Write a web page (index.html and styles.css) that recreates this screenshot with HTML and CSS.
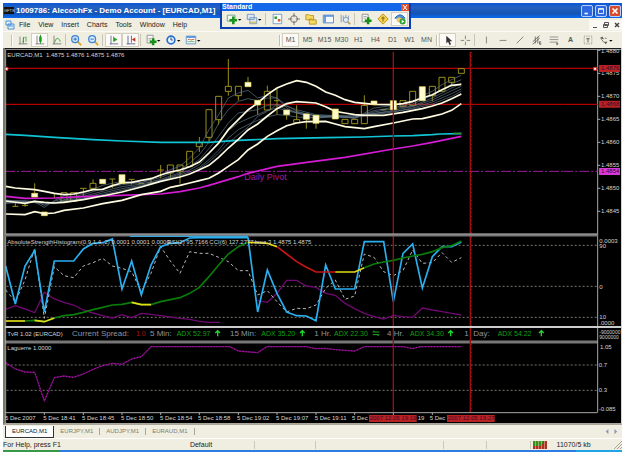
FILE: index.html
```html
<!DOCTYPE html>
<html lang="en">
<head>
<meta charset="utf-8">
<title>1009786: AleccohFx - Demo Account - [EURCAD,M1]</title>
<link rel="stylesheet" href="styles.css">
</head>
<body>
<div class="window">
  <header class="titlebar">
    <span class="app-logo">GFTS</span>
    <h1>1009786: AleccohFx - Demo Account - [EURCAD,M1]</h1>
    <div class="win-buttons">
      <button aria-label="Minimize"><svg viewBox="0 0 12 12"><path d="M3 9h4" stroke="#fff" stroke-width="2"/></svg></button>
      <button aria-label="Restore"><svg viewBox="0 0 12 12"><path d="M3 3h6v6H3zM3 4h6" stroke="#fff" fill="none"/></svg></button>
      <button class="close" aria-label="Close"><svg viewBox="0 0 12 12"><path d="M3 3l6 6M9 3l-6 6" stroke="#fff" stroke-width="2"/></svg></button>
    </div>
  </header>

  <nav class="menubar">
    <svg class="menu-icon" viewBox="0 0 10 10"><path d="M1 1h5v4H1zM3 4h6v5H3z" fill="#e8f2ff" stroke="#4b8fd0"/><path d="M4 6h4" stroke="#4b8fd0"/></svg>
    <a href="#">File</a><a href="#">View</a><a href="#">Insert</a><a href="#">Charts</a><a href="#">Tools</a><a href="#">Window</a><a href="#">Help</a>
    <div class="mdi-buttons">
      <button aria-label="Minimize chart"><svg viewBox="0 0 11 10"><path d="M4 7.500h4" stroke="#555"/></svg></button>
      <button aria-label="Restore chart"><svg viewBox="0 0 11 10"><path d="M4.500 2.500h4v3h-4zM3.500 4.500h4v3h-4z" stroke="#555" fill="none"/></svg></button>
      <button aria-label="Close chart"><svg viewBox="0 0 11 10"><path d="M4 3l4 4M8 3l-4 4" stroke="#444" stroke-width="1.500"/></svg></button>
    </div>
  </nav>

  <div class="toolbar">
    <i class="grip"></i>
    <button aria-label="Bar chart"><svg viewBox="0 0 14 14"><path d="M3.500 3v9M2 11.500h10" stroke="#777"/><path d="M6 9h1.500V4H9M7.500 4v7M10.500 3v6" stroke="#3a9a3a" fill="none"/></svg></button>
    <button class="on" aria-label="Candlesticks"><svg viewBox="0 0 14 14"><path d="M3.500 2v10M2 11.500h10" stroke="#777"/><path d="M7.500 1v10" stroke="#087a08"/><path d="M6 3h3v6H6z" fill="#18a018"/></svg></button>
    <button aria-label="Line chart"><svg viewBox="0 0 14 14"><path d="M3.500 2v10M2 11.500h10" stroke="#777"/><path d="M4 10q2-6 4-5t3 4" stroke="#3a9a3a" fill="none"/></svg></button>
    <i class="sep"></i>
    <button aria-label="Zoom in"><svg viewBox="0 0 14 14"><path d="M9 9l4 4" stroke="#d9a520" stroke-width="2"/><circle cx="6" cy="6" r="4" fill="#d4ebff" stroke="#3f83d6" stroke-width="1.500"/><path d="M4 6h4M6 4v4" stroke="#2460b0"/></svg></button>
    <button aria-label="Zoom out"><svg viewBox="0 0 14 14"><path d="M9 9l4 4" stroke="#d9a520" stroke-width="2"/><circle cx="6" cy="6" r="4" fill="#d4ebff" stroke="#3f83d6" stroke-width="1.500"/><path d="M4 6h4" stroke="#2460b0"/></svg></button>
    <i class="sep wide"></i>
    <button class="on" aria-label="Auto scroll"><svg viewBox="0 0 14 14"><path d="M3.500 2v10M2 11.500h10M6.500 3v6" stroke="#668"/><path d="M7 4l4 2.500L7 9z" fill="#28a028"/></svg></button>
    <button class="on" aria-label="Chart shift"><svg viewBox="0 0 14 14"><path d="M3.500 2v10M2 11.500h10M7.500 2v8" stroke="#558"/><path d="M12 4L8 6.500 12 9z" fill="#c03020"/></svg></button>
    <i class="sep wide"></i>
    <button class="drop" aria-label="Indicators"><svg viewBox="0 0 18 14"><path d="M2.500 1.500h7v9h-7z" fill="#fff" stroke="#888"/><path d="M4 5h4M4 7h3" stroke="#999"/><path d="M9.500 5v8M5.500 9h8" stroke="#149014" stroke-width="3"/><path d="M14 7h4l-2 2z"/></svg></button>
    <button class="drop" aria-label="Periods"><svg viewBox="0 0 18 14"><circle cx="7" cy="7" r="4.500" fill="#e6f2ff" stroke="#2a70cc" stroke-width="2"/><path d="M7 4v3h2" stroke="#234" fill="none"/><path d="M14 7h4l-2 2z"/></svg></button>
    <button class="drop" aria-label="Templates"><svg viewBox="0 0 18 14"><path d="M1.500 2.500h11v9h-11z" fill="#fff" stroke="#5a8cc0"/><path d="M2 3.500h10" stroke="#4c8fe0" stroke-width="2"/><path d="M3 7l2-1 2 1 4-1" stroke="#b05030" fill="none"/><path d="M3 9h8" stroke="#4a4"/><path d="M14 7h4l-2 2z"/></svg></button>
    <i class="grip periods"></i>
    <button class="on">M1</button><button>M5</button><button>M15</button><button>M30</button><button>H1</button><button>H4</button><button>D1</button><button>W1</button><button>MN</button>
    <i class="grip"></i>
    <button class="on" aria-label="Cursor"><svg viewBox="0 0 14 14"><path d="M5 2v9l2-2 2 4 1.500-1L9 8.500h3z" fill="#333"/></svg></button>
    <button aria-label="Crosshair"><svg viewBox="0 0 14 14"><path d="M7.500 2v4M7.500 9v4M2 7.500h4M9 7.500h4" stroke="#777"/></svg></button>
    <i class="sep wide"></i>
    <button aria-label="Vertical line"><svg viewBox="0 0 14 14"><path d="M7.500 3v8" stroke="#777"/></svg></button>
    <button aria-label="Horizontal line"><svg viewBox="0 0 14 14"><path d="M3 7.500h8" stroke="#777"/></svg></button>
    <button aria-label="Trendline"><svg viewBox="0 0 14 14"><path d="M3 11l8-8" stroke="#777"/></svg></button>
    <button aria-label="Channel"><svg viewBox="0 0 14 14"><path d="M2 9l8-7M2 12l8-7M5 3v8M8 3v8M11.500 9h-1.500v3h2M10 10.500h2" stroke="#666" fill="none"/></svg></button>
    <button aria-label="Fibonacci"><svg viewBox="0 0 14 14"><path d="M2 3.500h10M2 6.500h10M2 9.500h8" stroke="#888"/><path d="M10.500 9v4M10 11.500h2" stroke="#555"/></svg></button>
    <button class="letter">A</button>
    <button aria-label="Text label"><svg viewBox="0 0 14 14"><path d="M2.500 2.500h9v9h-9z" stroke="#888" fill="none" stroke-dasharray="1 1"/><path d="M5 5.500h4M7 5v5" stroke="#555"/></svg></button>
    <button class="drop" aria-label="Arrows"><svg viewBox="0 0 18 14"><path d="M2 5l3-2 2 3zM7 9l4 0-2 3z" fill="#555"/><path d="M4 6l3 4M8 5h2" stroke="#666"/><path d="M13 7h4l-2 2z"/></svg></button>
  </div>

  <main class="charts">
    <svg class="pane" viewBox="15 0 1848 567">
      <path class="level-red" d="M15 61H1690M15 169H1690"/>
      <path class="pivot" d="M15 370H1690"/>
      <path class="candle" d="M37 475h18M46 475V462M66 472h18M75 476V462M104 436V406M163 434V450M183 434h18v26h-18zM212 434h18v26h-18zM240 421h20M250 421V445M270 406h18v15h-18zM279 406V394M328 393h18M337 393V420M386 394h18M395 394V410M415 407h18M444 405h18M453 405V388M472 366h20M482 351V391M502 351h18v24h-18zM511 375V390M531 351h18v20h-18zM540 371V407M560 310h18v46h-18zM589 284h18v12h-18zM598 284V267M598 296V312M618 185h18v83h-18zM627 268V280M647 145h18v70h-18zM656 215V230M676 115h18v15h-18zM685 115V33M685 130V143M706 115h18v28h-18zM715 143V158M744 103V87M773 170V200M793 130h18v56h-18zM802 130V113M822 158h18M831 122V200M860 200V215M881 215h18v9h-18zM890 215V172M919 214V242M948 226V242M1026 214h18v13h-18zM1055 214h18v13h-18zM1084 172h18v55h-18zM1093 172V142M1142 185h18M1200 158h18v17h-18zM1229 130h18v42h-18zM1288 115h18v28h-18zM1297 143V160M1317 88h18v42h-18zM1346 88h18v15h-18zM1355 103V115M1375 62h18v14h-18z"/>
      <g class="ribbon">
        <polyline points="17,458 75,458 104,462 133,478 163,458 192,443 250,436 308,412 366,400 424,404 482,382 511,365 540,355 569,330 598,300 627,245 656,200 685,150 715,135 744,127 773,150 802,142 831,150 860,180 890,195 948,212 1006,200 1064,212 1093,195 1122,180 1180,172 1238,163 1267,143 1297,130 1326,110 1355,95 1384,82"/>
        <polyline points="17,464 75,464 104,458 133,472 163,460 192,450 250,440 308,422 366,410 424,404 482,388 540,365 569,345 598,320 627,282 656,225 685,185 715,160 744,152 773,158 802,150 831,150 860,172 890,190 948,205 1006,208 1064,208 1122,188 1180,178 1238,168 1297,142 1355,108 1384,95"/>
        <polyline points="17,456 104,464 133,468 163,465 192,455 250,445 308,430 366,416 424,408 482,394 540,374 569,355 598,335 627,302 656,265 685,225 715,195 744,190 773,185 802,172 831,170 860,185 890,193 948,202 1006,206 1064,208 1122,192 1180,182 1238,174 1297,150 1355,120 1384,106"/>
        <polyline points="17,462 104,460 163,467 192,457 250,450 308,435 366,422 424,412 482,397 540,378 569,366 598,350 627,318 656,288 685,248 715,225 744,212 773,200 802,187 831,180 860,188 890,195 948,204 1006,205 1064,210 1122,197 1180,187 1238,176 1297,156 1355,128 1384,115"/>
        <polyline points="17,466 104,462 163,464 192,460 250,452 308,440 366,427 424,414 482,399 540,382 569,372 598,358 627,335 656,306 685,270 715,245 744,230 773,217 802,207 831,200 860,202 890,207 948,210 1006,206 1064,206 1122,200 1180,192 1238,180 1297,162 1355,137 1384,123"/>
        <polyline points="598,362 627,342 656,315 685,285 715,260 744,238 773,205 802,190 831,170 860,175 890,185 948,200 1006,203 1064,203 1122,196 1180,190 1238,183 1297,168 1355,145 1384,130"/>
      </g>
      <polyline class="slow-cyan" points="17,259 75,262 163,268 279,275 366,279 482,283 627,283 700,278 831,272 980,269 1090,267 1180,264 1238,263 1297,260 1320,258 1384,257"/>
      <path d="M1360 256h24" stroke="#2f9a2f" stroke-width="4"/>
      <polyline class="slow-magenta" points="17,445 75,451 163,450 250,446 366,442 482,438 540,431 598,420 627,412 715,386 744,376 831,355 920,343 1035,328 1180,303 1238,294 1297,283 1384,265"/>
      <g class="band">
        <polyline points="17,415 46,420 104,425 133,430 163,436 192,440 221,438 250,432 279,425 308,424 337,413 366,405 395,403 424,397 453,392 482,381 511,372 540,366 569,356 598,342 627,315 656,285 685,245 715,215 744,186 773,165 802,140 831,120 860,108 890,98 919,103 948,115 977,132 1006,142 1035,155 1064,163 1093,166 1122,169 1180,170 1209,167 1238,160 1267,150 1297,140 1326,125 1355,112 1384,109"/>
        <polyline points="17,459 75,466 104,460 133,463 163,465 192,463 250,455 308,444 366,432 424,417 482,400 540,387 569,378 598,365 627,352 656,328 685,300 715,274 744,246 773,228 802,204 831,182 860,167 890,161 948,165 977,176 1006,190 1035,195 1064,200 1093,202 1151,202 1209,193 1267,182 1297,174 1326,165 1355,152 1384,138"/>
        <polyline points="17,498 75,500 104,491 133,497 163,495 192,487 250,480 308,467 366,457 424,440 482,430 511,418 540,412 569,405 598,398 627,391 656,375 685,355 715,335 744,306 773,288 802,265 831,248 860,233 890,225 919,221 977,220 1006,228 1035,236 1093,242 1122,236 1180,225 1238,213 1267,212 1297,205 1326,198 1355,187 1384,167"/>
      </g>
      <path class="bear" d="M95 436h18v11H95zM124 492h18v11h-18zM299 394h18v13h-18zM357 380h18v26h-18zM735 103h18v13h-18zM764 157h18v14h-18zM851 186h18v14h-18zM910 198h18v16h-18zM939 202h18v24h-18zM997 183h18v30h-18zM1113 159h18v11h-18zM1171 158h18v27h-18zM1258 116h18v42h-18z"/>
      <path class="level-red thin" d="M1180 12V567M1411 12V567"/>
      <path class="cursor-dots" d="M1414 12V567"/>
      <path class="frame" d="M17 567V4H1863M1793 4V567M1793 7h8M1793 76h8M1793 145h8M1793 214h8M1793 283h8M1793 352h8M1793 421h8M1793 490h8"/>
      <path d="M15 561H1793" stroke="#777" stroke-width="9"/><path d="M15 558H1793" stroke="#bbb" stroke-width="2"/>
      <path d="M390 565H744" stroke="#35a8e0" stroke-width="4"/>
      <path class="level-red" d="M1690 61H1793M1690 169H1793"/><path class="pivot" d="M1690 370H1793"/>
      <path d="M15 58h9v9h-9zM1781 58h9v9h-9z" fill="#fff" stroke="#c22" stroke-width="3"/>
      <text x="22" y="26">EURCAD,M1&#160; 1.4875 1.4876 1.4875 1.4876</text>
      <text class="pivot-label" x="733" y="396">Daily Pivot</text>
      <g class="axis">
        <text x="1803" y="15">1.4880</text><text x="1803" y="82">1.4875</text><text x="1803" y="151">1.4870</text><text x="1803" y="220">1.4865</text><text x="1803" y="289">1.4860</text><text x="1803" y="358">1.4855</text><text x="1803" y="427">1.4850</text><text x="1803" y="496">1.4845</text>
        <path d="M1797 51h63v21h-63zM1797 158h63v21h-63z" fill="#b82222"/><path d="M1797 360h63v21h-63z" fill="#d838d8"/>
        <text class="dark" x="1803" y="67">1.4876</text><text class="dark" x="1803" y="175">1.4868</text><text class="dark" x="1803" y="376">1.4854</text>
      </g>
    </svg>

    <svg class="pane" viewBox="15 21 1848 273">
      <path class="level" d="M20 46H1793M20 169H1793M20 262H1793"/>
      <polyline class="purple" points="17,238 46,227 75,237 104,248 133,187 163,207 192,217 221,225 250,240 279,249 308,257 337,264 366,254 395,263 424,250 453,253 482,257 511,261 540,265 569,268 598,274 627,277 660,277"/>
      <polyline class="purple" points="773,212 802,217 831,190 860,151 890,151 919,168 948,172 977,190 1006,196 1035,220 1064,236 1093,250 1122,260 1151,267 1180,256 1209,260 1238,262 1267,234 1297,240 1326,245 1355,250 1384,255"/>
      <polyline class="dashed" points="17,180 46,215 75,150 104,55 133,265 163,110 192,137 221,143 250,108 279,98 308,85 337,108 366,115 395,125 424,185 453,130 482,50 511,93 540,130 569,65 598,70 627,70 656,82 685,95 715,122 744,122 773,195 802,182 831,215 860,246 890,235 919,236 948,225 977,175 1006,150 1035,208 1064,198 1093,72 1122,82 1151,125 1180,137 1209,122 1238,60 1267,100 1297,98 1326,68 1355,97 1384,83"/>
      <polyline class="osc-outer" points="17,108 46,222 75,108 104,62 133,246 163,93 221,93 250,57 279,40 308,38 337,27 366,177 395,93 424,195 453,105 482,50 511,40 540,38 569,24 598,23 744,23 773,246 802,120 831,190 860,246 890,257 919,258 948,272 977,105 1006,177 1064,177 1093,35 1151,35 1180,215 1209,70 1238,42 1267,174 1297,80 1326,50 1355,50 1384,36"/>
      <g class="strength">
        <polyline class="up" points="75,273 104,271 133,275 163,264 192,257 221,254 250,247 279,239 308,232 337,225 366,223 395,217 424,224 453,224 482,215 511,209 540,203 569,190 598,172 627,140 656,105 685,72 715,50 744,37"/>
        <polyline class="flat" points="17,273 75,273"/><polyline class="flat" points="104,271 133,275 163,264"/><polyline class="flat" points="395,217 424,224 453,224"/>
        <polyline class="flat" points="744,37 773,38 802,40 831,50"/>
        <polyline class="down" points="831,50 860,72 890,95 919,112 948,126 1006,126"/>
        <polyline class="flat" points="1006,126 1064,126 1093,113"/>
        <polyline class="up" points="1093,113 1122,102 1151,96 1180,91 1209,84 1238,78 1267,73 1297,65 1326,53 1355,47 1384,33"/>
      </g>
      <path class="level-red thin" d="M1180 21V290M1411 21V290"/><path class="cursor-dots" d="M1414 21V290"/>
      <path class="frame" d="M17 21V294M1793 21V290"/>
      <path d="M15 291H1863" stroke="#ccc" stroke-width="6"/>
      <text x="22" y="42">AbsoluteStrengthHistogram(0,9,1,4,,2) 0.0001 0.0001 0.0000</text>
      <text x="502" y="42">RSI(2) 95.7166</text><text x="628" y="42">CCI(6) 127.2777</text><text x="764" y="42">bma 3 1.4875 1.4875</text>
      <g class="axis"><text x="1798" y="38">0.0003</text><text x="1798" y="54">90</text><text x="1798" y="176">0</text><text x="1798" y="268">10</text><text x="1798" y="285">.0000</text></g>
    </svg>

    <svg class="pane" viewBox="15 294 1848 48">
      <path d="M15 336H1793" stroke="#777" stroke-width="9"/>
      <text x="22" y="318">TvR 1.02 (EURCAD)</text>
      <g class="trend">
        <text x="216" y="319">Current Spread:</text><text class="red" x="408" y="319">1.0</text>
        <text x="450" y="319">5 Min:</text><text class="adx" x="530" y="319">ADX 52.97</text>
        <text x="690" y="319">15 Min:</text><text class="adx" x="784" y="319">ADX 35.20</text>
        <text x="943" y="319">1 Hr.</text><text class="adx" x="1002" y="319">ADX 22.30</text>
        <text x="1161" y="319">4 Hr.</text><text class="adx" x="1230" y="319">ADX 34.30</text>
        <text x="1393" y="319">1</text><text x="1420" y="319">Day:</text><text class="adx" x="1493" y="319">ADX 54.22</text>
      </g>
      <path d="M653 319V304M646 309l7-7 7 7M907 319V304M900 309l7-7 7 7M1352 319V304M1345 309l7-7 7 7M1624 319V304M1617 309l7-7 7 7" stroke="#20d830" stroke-width="4" fill="none"/>
      <path d="M1118 306h20M1118 314h20M1122 302v4M1134 314v4" stroke="#20a828" stroke-width="3"/>
      <path class="level-red thin" d="M1180 294V340M1411 294V340"/>
      <path class="frame" d="M17 294V342M1793 294V342"/>
      <g class="axis small"><text x="1798" y="311">-9000000</text><text x="1798" y="328">9000000</text></g>
    </svg>

    <svg class="pane" viewBox="15 12 1848 237">
      <path class="level" d="M20 75H1793M20 151H1793"/>
      <polyline class="laguerre" points="17,68 46,87 75,96 104,97 133,183 163,113 192,108 221,112 250,102 279,88 308,77 337,70 366,73 395,57 424,50 453,20 690,20 715,33 773,38 800,20 920,20 945,26 977,25 1006,29 1035,31 1064,33 1093,20 1210,20 1238,26 1260,20 1384,20"/>
      <polyline class="laguerre-dots" points="17,68 46,87 75,96 104,97 133,183 163,113 192,108 221,112 250,102 279,88 308,77 337,70 366,73 395,57 424,50 453,20 690,20 715,33 773,38 800,20 920,20 945,26 977,25 1006,29 1035,31 1064,33 1093,20 1210,20 1238,26 1260,20 1384,20"/>
      <path class="level-red thin" d="M1180 12V217M1411 12V217"/><path class="cursor-dots" d="M1414 12V217"/>
      <path class="frame" d="M17 12V249M1793 12V217M15 218H1793M133 218v7M250 218v7M366 218v7M482 218v7M598 218v7M715 218v7M831 218v7M948 218v7M1064 218v7M1180 218v7M1297 218v7"/>
      <text x="22" y="30">Laguerre 1.0000</text>
      <g class="axis"><text x="1800" y="26">1.05</text><text x="1796" y="80">0.7</text><text x="1796" y="156">0.3</text><text x="1796" y="213">-0.085</text></g>
      <g class="axis time">
        <text x="15" y="241">5 Dec 2007</text><text x="130" y="241">5 Dec 18:41</text><text x="246" y="241">5 Dec 18:45</text><text x="363" y="241">5 Dec 18:50</text><text x="480" y="241">5 Dec 18:54</text><text x="594" y="241">5 Dec 18:58</text><text x="711" y="241">5 Dec 19:02</text><text x="828" y="241">5 Dec 19:07</text><text x="944" y="241">5 Dec 19:11</text><text x="1056" y="241">5 Dec</text><text x="1253" y="241">19</text><text x="1289" y="241">5 Dec</text>
        <path d="M1107 225h143v21h-143zM1341 225h143v21h-143z" fill="#b82222"/>
        <text class="dark" x="1109" y="241">2007.12.05 19:19</text><text class="dark" x="1343" y="241">2007.12.05 19:27</text>
      </g>
    </svg>
  </main>

  <nav class="tabs">
    <a class="active" href="#">EURCAD,M1</a><a href="#">EURJPY,M1</a><a href="#">AUDJPY,M1</a><a href="#">EURAUD,M1</a>
    <svg class="tab-scroll" viewBox="0 0 16 8"><path d="M5 1L2 4l3 3zM12 1l3 3-3 3z" fill="#8a97b5"/></svg>
  </nav>

  <footer class="status">
    <span class="help">For Help, press F1</span><span class="profile">Default</span><span></span><span></span><span></span><span></span>
    <span class="link"><svg viewBox="0 0 14 8"><path d="M0 0h14v8H0z" fill="#b03020"/><path d="M0 0h10v3H8v2H0z" fill="#3c8c20"/><path d="M2.500 0v8M5.500 0v8M8.500 0v8M11.500 0v8" stroke="#e8d8c0" stroke-width=".5"/></svg>11070/5 kb</span>
    <svg class="resize" viewBox="0 0 9 9"><path d="M1 9l8-8M4 9l5-5M7 9l2-2" stroke="#aaa693"/></svg>
  </footer>
  <div class="taskbar"><i class="start"></i><i class="tray"></i></div>

  <section class="floating">
    <header><h2>Standard</h2><button aria-label="Close toolbar"><svg viewBox="0 0 8 7"><path d="M2 1l4 5M6 1L2 6" stroke="#fff"/></svg></button></header>
    <div class="tools">
      <button class="drop" aria-label="New chart"><svg viewBox="0 0 18 14"><path d="M1.500 2.500h9v7h-9z" fill="#eef6ee" stroke="#6a9a8a"/><path d="M8.500 4v9M4 8.500h9" stroke="#18951c" stroke-width="3"/><path d="M14 7h4l-2 2z"/></svg></button>
      <button class="drop" aria-label="Profiles"><svg viewBox="0 0 18 14"><path d="M1.500 1.500h8v6h-8zM4.500 5.500h8v7h-8z" fill="#d8e8fa" stroke="#7090b8"/><path d="M5 10h7v2H5z" fill="#d8c468"/><path d="M14 7h4l-2 2z"/></svg></button>
      <i class="sep wide"></i>
      <button aria-label="Market watch"><svg viewBox="0 0 14 14"><path d="M2.500 1.500h10v11h-10z" fill="#f7fbff" stroke="#6a94cc"/><path d="M4 4h3v3H4z" fill="#38a038"/><path d="M8 7h3v3H8z" fill="#d06040"/></svg></button>
      <button aria-label="Data window"><svg viewBox="0 0 14 14"><circle cx="7" cy="7" r="4" fill="none" stroke="#666"/><path d="M7 0v5M7 9v5M0 7h5M9 7h5" stroke="#666"/></svg></button>
      <button aria-label="Navigator"><svg viewBox="0 0 14 14"><path d="M1 2h4l1 1h4v5H1zM5 7h3l1 1h4v5H5z" fill="#f6dc62" stroke="#b89018"/></svg></button>
      <button aria-label="Terminal"><svg viewBox="0 0 14 14"><path d="M1.500 2.500h12v9h-12z" fill="#f6faff" stroke="#4878b8"/><path d="M2 3.500h11M3.500 3v8" stroke="#5590dc" stroke-width="2"/></svg></button>
      <button aria-label="Strategy tester"><svg viewBox="0 0 14 14"><path d="M2.500 2v9M5 3v7M8 2v5M11 3v5" stroke="#7a92b4"/><circle cx="8" cy="8" r="3" fill="#e0ecf8" stroke="#7a92b4"/><path d="M10 10l3 3" stroke="#b8a060" stroke-width="2"/></svg></button>
      <i class="sep wide"></i>
      <button aria-label="New order"><svg viewBox="0 0 14 14"><path d="M2.500 1.500h7v9h-7z" fill="#fff" stroke="#888"/><path d="M4 4h4M4 6h3" stroke="#999"/><path d="M9.500 5v8M5.500 9h8" stroke="#149014" stroke-width="3"/></svg></button>
      <button aria-label="MetaEditor"><svg viewBox="0 0 14 14"><path d="M7 1l6 6-6 6-6-6z" fill="#f7d24c" stroke="#b88a10"/><path d="M7 4v6M5 6h4" stroke="#765808"/></svg></button>
      <button class="on" aria-label="Expert advisors"><svg viewBox="0 0 14 14"><path d="M1 6q6-8 12 0z" fill="#4c94e0" stroke="#2864a8"/><circle cx="6" cy="8" r="3" fill="#f0c870"/><circle cx="10" cy="10" r="3.500" fill="#28a030"/><path d="M9 8l3 2-3 2z" fill="#fff"/></svg></button>
    </div>
  </section>
</div>
</body>
</html>
```

FILE: styles.css
```css
* { box-sizing: border-box; }
body {
  margin: 0;
  padding: 3px 3px 0;
  background: #fff;
  font: 7px/10px "Liberation Sans", sans-serif;
  color: #222;
}
h1, h2 { margin: 0; font-size: inherit; }
a { color: inherit; text-decoration: none; }
svg { display: block; }
button { margin: 0; padding: 0; border: 0; background: none; font: inherit; color: #555; }

.window {
  position: relative;
  display: flex;
  flex-direction: column;
  background: #f0eee1;
}

.titlebar {
  display: flex;
  align-items: center;
  gap: 2px;
  height: 15px;
  padding: 0 1px;
  background: linear-gradient(#0a58d8, #2460c0 30%, #1554b4 70%, #0868f0);
  color: #fff;
}
.titlebar h1 { font-size: 8px; font-weight: bold; white-space: nowrap; }
.app-logo { width: 10px; height: 7px; background: #111; color: #ddd; font-size: 4px; line-height: 7px; text-align: center; }
.win-buttons { display: flex; gap: 2px; margin-left: auto; }
.win-buttons button { width: 12px; height: 12px; border: 1px solid #b8d0ff; border-radius: 2px; background: #2e68e0; }
.win-buttons .close { background: #d84c2c; }

.menubar { display: flex; align-items: center; gap: 8px; height: 13px; padding-left: 2px; }
.menu-icon { width: 10px; height: 10px; margin-right: -4px; }
.mdi-buttons { display: flex; margin-left: auto; }
.mdi-buttons button { width: 11px; height: 10px; background: #f9f8f2; }

.toolbar { display: flex; align-items: center; height: 17px; padding-left: 7px; border-top: 1px solid #fbfaf5; overflow: hidden; }
.toolbar button, .tools button { display: flex; flex: none; align-items: center; justify-content: center; width: 17px; height: 14px; }
.toolbar button svg, .tools button svg { height: 12px; }
.toolbar .drop, .tools .drop { width: 20px; }
.toolbar .on, .tools .on { border: 1px solid #d2cfc0; background: #fbfaf6; }
.toolbar .letter { font-weight: bold; }
.grip { flex: none; width: 2px; height: 11px; margin: 0 1px; border-left: 1px solid #c2bfae; border-right: 1px solid #fff; }
.grip.periods { margin-left: 76px; }
.sep { flex: none; width: 2px; height: 12px; border-left: 1px solid #c8c5b4; }
.sep.wide { margin: 0 1px; }

.charts { border-left: 2px solid #77776a; border-right: 1px solid #d8d5c6; background: #000; border-bottom: 2px solid #aaa79a; }
.pane { width: 100%; height: auto; font-size: 18px; background: #000; }
.pane text { fill: #d4d4d4; }
.pane polyline { fill: none; }
.axis.small { font-size: 15px; }
.pane text.dark { fill: #3c0a2c; }
.frame { fill: none; stroke: #a8a8a8; stroke-width: 3; }
.level-red { stroke: #b40000; stroke-width: 4; }
.level-red.thin { stroke: #a80c0c; }
.cursor-dots { stroke: #6a1080; stroke-width: 3; stroke-dasharray: 3 9; }
.pivot { stroke: #9c1c9c; stroke-width: 3; stroke-dasharray: 30 6 6 6; }
.pane text.pivot-label { fill: #a01aa0; font-size: 27px; }
.candle { fill: none; stroke: #98901a; stroke-width: 3; }
.bear { fill: #fffbd0; stroke: #e8dc50; stroke-width: 2; }
.ribbon { stroke: #62788c; stroke-width: 2; }
.band { stroke: #fffbe0; stroke-width: 5; }
.slow-cyan { stroke: #10c4d4; stroke-width: 5; }
.slow-magenta { stroke: #d41cd4; stroke-width: 5; }
.level { stroke: #77776c; stroke-width: 3; stroke-dasharray: 6 6; }
.purple { stroke: #700870; stroke-width: 4; }
.dashed { stroke: #b8b8b8; stroke-width: 3; stroke-dasharray: 9 8; }
.osc-outer { stroke: #2ab0f0; stroke-width: 5; }
.strength { stroke-width: 5; }
.up { stroke: #0a7c0a; }
.flat { stroke: #e4dc18; }
.down { stroke: #c81414; }
.trend { font-size: 24px; }
.pane .trend text { fill: #8c96a0; }
.pane .trend .adx { fill: #0ca010; font-size: 21px; }
.pane .trend .red { fill: #b01010; font-size: 21px; }
.laguerre { stroke: #660866; stroke-width: 4; }
.laguerre-dots { stroke: #c020c0; stroke-width: 3; stroke-dasharray: 3 6; }

.tabs { display: flex; align-items: center; height: 13px; padding-left: 2px; color: #7f7c6a; font-size: 6px; }
.tabs a { padding: 0 6px; border-right: 1px solid #aaa795; line-height: 7px; }
.tabs .active { padding: 2px 6px; border: 1px solid #333; border-top: 0; background: #fff; color: #111; }
.tab-scroll { width: 16px; height: 7px; margin: 0 3px 0 auto; }

.status { display: grid; grid-template-columns: 186fr 64fr 60fr 128fr 43fr 43fr 82fr 10fr; align-items: center; height: 12px; border-top: 1px solid #fff; white-space: nowrap; }
.status span + span + span { height: 8px; border-left: 1px solid #ccc9b8; }
.status .link { display: flex; align-items: center; gap: 10px; padding-left: 2px; }
.link svg { width: 14px; height: 8px; }
.resize { width: 9px; height: 9px; justify-self: end; }
.taskbar { display: flex; justify-content: space-between; height: 3px; background: #2c7ce4; }
.start { width: 56px; background: #38984a; }
.tray { width: 46px; background: #20a4e4; }

.floating { position: absolute; left: 217px; top: 0; width: 191px; border: 2px solid #0c3eb0; border-top: 0; background: #f0eee1; }
.floating header { display: flex; align-items: center; justify-content: space-between; height: 8px; background: #1268e8; color: #fff; line-height: 8px; }
.floating header button { width: 8px; height: 7px; background: #dc5030; }
.tools { display: flex; align-items: center; height: 16px; padding-left: 2px; }
```
